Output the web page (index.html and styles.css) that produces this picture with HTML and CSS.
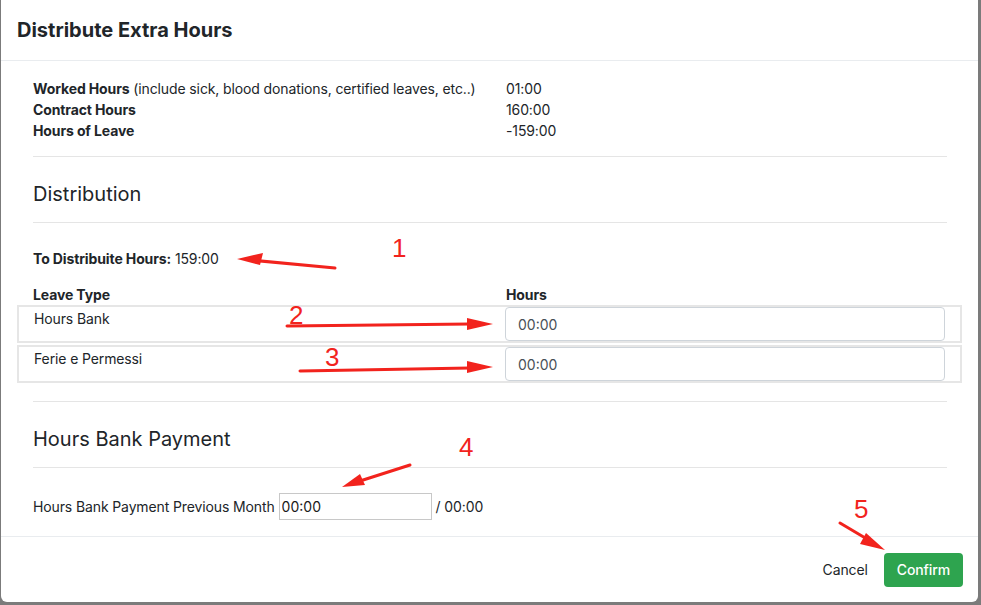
FILE: index.html
```html
<!DOCTYPE html>
<html lang="en">
<head>
    <meta charset="UTF-8">
    <title>Distribute Extra Hours</title>
    <link rel="stylesheet" href="styles.css">
</head>
<body>

<div class="modal">
    <div class="modal-header">
        <h3>Distribute Extra Hours</h3>
    </div>

    <div class="modal-body">
        <div class="content">
            <div class="summary">
                <div><b>Worked Hours</b> (include sick, blood donations, certified leaves, etc..)</div>
                <div>01:00</div>
                <div><b>Contract Hours</b></div>
                <div>160:00</div>
                <div><b>Hours of Leave</b></div>
                <div>-159:00</div>
            </div>

            <hr class="first">
            <h4>Distribution</h4>
            <hr>

            <p class="to-distribute"><b>To Distribuite Hours:</b> 159:00</p>

            <div class="summary head">
                <div><b>Leave Type</b></div>
                <div><b>Hours</b></div>
            </div>
        </div>

        <div class="leave-list">
            <div class="leave-row">
                <div class="leave-name">Hours Bank</div>
                <input type="text" class="time-input" value="00:00">
            </div>
            <div class="leave-row">
                <div class="leave-name">Ferie e Permessi</div>
                <input type="text" class="time-input" value="00:00">
            </div>
        </div>

        <div class="content">
            <hr class="after-list">
            <h4 class="bank-title">Hours Bank Payment</h4>
            <hr>

            <div class="payment">
                <label for="payment">Hours Bank Payment Previous Month</label>
                <input type="text" id="payment" class="small-input" value="00:00">
                <span>/ 00:00</span>
            </div>
        </div>
    </div>

    <div class="modal-footer">
        <button class="btn-link">Cancel</button>
        <button class="btn-success">Confirm</button>
    </div>

    <!-- annotations drawn over the screenshot -->
    <svg class="notes" width="981" height="605" viewBox="0 0 981 605">
        <g fill="none" stroke="#f2231d" stroke-width="3" stroke-linecap="round">
            <path d="M335 268 L250 260"/>
            <path d="M287 326 L470 324"/>
            <path d="M300 371 L470 368"/>
            <path d="M410 465 L360 481"/>
            <path d="M840 523 L872 542"/>
        </g>
        <g fill="#f2231d">
            <polygon points="237,259 263,253 260,265"/>
            <polygon points="493,324 467,318 467,330"/>
            <polygon points="493,367 467,361 467,373"/>
            <polygon points="342,487 360,474 365,485"/>
            <polygon points="885,550 866,533 860,544"/>
        </g>
        <g fill="#f2231d" font-family="Liberation Sans, Arial, sans-serif" font-size="26">
            <text x="392" y="257">1</text>
            <text x="289" y="324">2</text>
            <text x="325" y="366">3</text>
            <text x="459" y="456">4</text>
            <text x="854" y="518">5</text>
        </g>
    </svg>
</div>

</body>
</html>
```

FILE: styles.css
```css
body {
    margin: 0;
    background-color: #7b7b7b;
    font-family: Inter, "Noto Sans", sans-serif;
    font-size: 14px;
    letter-spacing: -0.12px;
    color: #212529;
    height: 605px;
    overflow: hidden;
}

.modal {
    position: relative;
    width: 977px;
    height: 602px;
    margin-left: 1px;
    background-color: #fff;
    border-radius: 0 0 6px 6px;
    display: flex;
    flex-direction: column;
}

.modal-header {
    padding: 16px;
    border-bottom: 1px solid #e9ecef;
}

.modal-header h3 {
    margin: 0;
    font-size: 20px;
    line-height: 28px;
    font-weight: 700;
    letter-spacing: 0;
}

.modal-body {
    padding: 17px 16px 16px;
    flex: 1;
}

.content {
    margin: 0 15px 0 16px;
}

.summary {
    display: grid;
    grid-template-columns: 473px 1fr;
    line-height: 21px;
}

hr {
    border: none;
    border-top: 1px solid #e5e5e5;
    margin: 16px 0;
}

hr.first {
    margin-top: 15px;
}

h4 {
    margin: 0;
    font-size: 20px;
    font-weight: 400;
    line-height: 24px;
    padding-top: 9px;
    letter-spacing: 0;
}

.to-distribute {
    margin: 25px 0 16px;
    line-height: 21px;
}

.head {
    line-height: 20px;
}

.leave-list {
    display: flex;
    flex-direction: column;
    gap: 2px;
}

.leave-row {
    display: grid;
    grid-template-columns: 486px 1fr;
    border: 2px solid #e6e6e6;
    padding: 0 15px 0 0;
    height: 34px;
    box-sizing: content-box;
}

.leave-name {
    padding: 1px 0 0 15px;
    line-height: 21px;
}

.time-input {
    height: 34px;
    box-sizing: border-box;
    border: 1px solid #ced4da;
    border-radius: 4px;
    padding: 0 12px;
    font-family: inherit;
    font-size: 14px;
    color: #495057;
}

.after-list {
    margin-top: 18px;
}

.bank-title {
    padding-top: 9px;
}

.payment {
    display: flex;
    align-items: center;
    gap: 4px;
    margin-top: 25px;
}

.small-input {
    width: 153px;
    height: 27px;
    box-sizing: border-box;
    border: 1px solid #c8c8c8;
    padding: 0 2px;
    font-family: inherit;
    font-size: 14px;
    font-weight: 400;
    color: #1a1a1a;
}

.modal-footer {
    border-top: 1px solid #e9ecef;
    height: 65px;
    display: flex;
    align-items: center;
    justify-content: flex-end;
    gap: 8px;
    padding: 0 15px;
}

.btn-link {
    background: none;
    border: none;
    font-family: inherit;
    font-size: 14px;
    letter-spacing: inherit;
    color: #212529;
    padding: 8px 8px;
}

.btn-success {
    background-color: #2ea44f;
    color: #fff;
    border: none;
    border-radius: 4px;
    height: 34px;
    padding: 0 13px;
    font-family: inherit;
    font-size: 14px;
    letter-spacing: inherit;
    font-weight: 500;
}

.notes {
    position: absolute;
    left: -1px;
    top: 0;
    pointer-events: none;
}
```
